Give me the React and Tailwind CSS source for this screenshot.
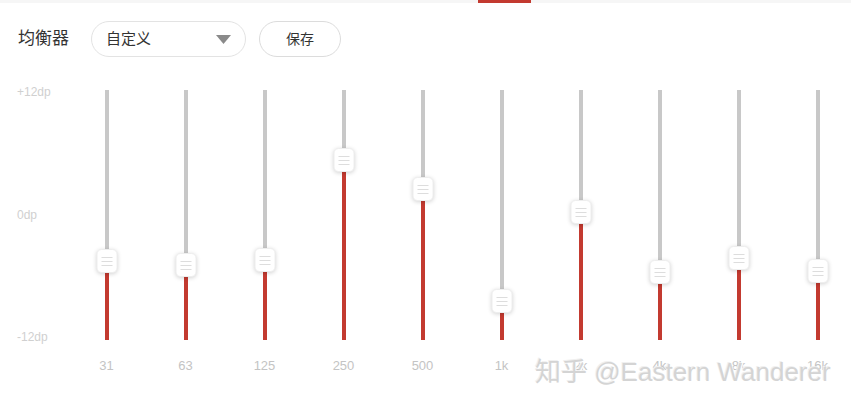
// Equalizer panel: preset picker, save button and ten band sliders
const bands = [
  { label: "31", y: 171 },
  { label: "63", y: 175 },
  { label: "125", y: 170 },
  { label: "250", y: 70 },
  { label: "500", y: 99 },
  { label: "1k", y: 211 },
  { label: "2k", y: 122 },
  { label: "4k", y: 182 },
  { label: "8k", y: 168 },
  { label: "16k", y: 181 },
];

const FONT = { fontFamily: '"Liberation Sans", "Noto Sans CJK SC", sans-serif' };

function Band({ band }) {
  return (
    <div className="flex flex-col items-center">
      <div className="relative h-[250px] w-[4px] bg-[#c8c8c8]">
        {/* filled part below the knob */}
        <div className="absolute bottom-0 left-0 w-[4px] bg-[#c33a30]" style={{ top: band.y }} />
        <div
          className="absolute left-1/2 flex h-[24px] w-[21px] -translate-x-1/2 -translate-y-1/2 flex-col items-center justify-center gap-[3px] rounded-[5px] border border-[#eeeeee] bg-white shadow-[0_1px_4px_rgba(0,0,0,0.18)]"
          style={{ top: band.y }}
        >
          <span className="h-px w-[11px] bg-[#dddddd]" />
          <span className="h-px w-[11px] bg-[#dddddd]" />
          <span className="h-px w-[11px] bg-[#dddddd]" />
        </div>
      </div>
      <div className="mt-[18px] text-[13px] leading-4 text-[#c4c4c4]">{band.label}</div>
    </div>
  );
}

export default function App() {
  return (
    <div className="relative h-[407px] w-[851px] overflow-hidden bg-white" style={FONT}>
      {/* tab strip with the active marker */}
      <div className="relative h-[3px] w-full bg-[#f6f6f6]">
        <div className="absolute left-[478px] top-0 h-[3px] w-[53px] bg-[#c33a30]" />
      </div>

      <div className="mt-[18px] flex items-center pl-[18px]">
        <span className="text-[17px] text-[#333333]">均衡器</span>
        <div className="ml-[22px] flex h-[36px] w-[155px] items-center justify-between rounded-full border border-[#e3e3e3] pl-[14px] pr-[14px]">
          <span className="text-[15px] text-[#333333]">自定义</span>
          <svg width="15" height="9" viewBox="0 0 15 9">
            <path d="M0 0h15L7.5 9z" fill="#8a8a8a" />
          </svg>
        </div>
        <button className="ml-[13px] flex h-[36px] w-[82px] items-center justify-center rounded-full border border-[#dcdcdc] text-[14px] text-[#333333]">
          保存
        </button>
      </div>

      <div className="mt-[33px] flex">
        {/* dB axis */}
        <div className="-mt-[4px] flex h-[257px] w-[67px] shrink-0 flex-col justify-between pl-[17px] text-[12px] leading-[12px] text-[#d0d0d0]">
          <span>+12dp</span>
          <span>0dp</span>
          <span>-12dp</span>
        </div>
        <div className="grid shrink-0 grid-cols-[repeat(10,79px)]">
          {bands.map((b) => (
            <Band key={b.label} band={b} />
          ))}
        </div>
      </div>

      <div className="pointer-events-none absolute left-[535px] top-[356px] text-[26px] leading-8 text-[#d4d4d4] [text-shadow:1px_1px_0_#ffffff,-1px_-1px_0_#f0f0f0]">
        知乎 @Eastern Wanderer
      </div>
    </div>
  );
}
